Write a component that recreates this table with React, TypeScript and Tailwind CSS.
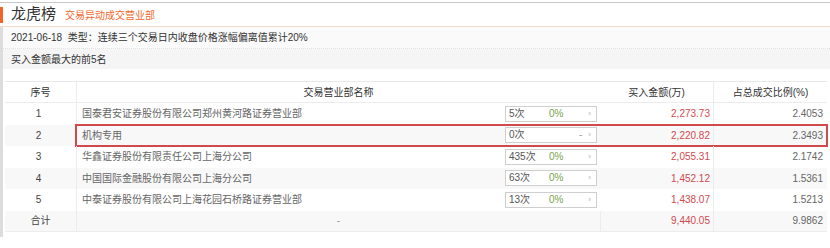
import React from "react";

type Row = {
  no: string;
  name: string;
  times: string;
  pct: string;
  amount: string;
  ratio: string;
};

const rows: Row[] = [
  { no: "1", name: "国泰君安证券股份有限公司郑州黄河路证券营业部", times: "5次", pct: "0%", amount: "2,273.73", ratio: "2.4053" },
  { no: "2", name: "机构专用", times: "0次", pct: "-", amount: "2,220.82", ratio: "2.3493" },
  { no: "3", name: "华鑫证券股份有限责任公司上海分公司", times: "435次", pct: "0%", amount: "2,055.31", ratio: "2.1742" },
  { no: "4", name: "中国国际金融股份有限公司上海分公司", times: "63次", pct: "0%", amount: "1,452.12", ratio: "1.5361" },
  { no: "5", name: "中泰证券股份有限公司上海花园石桥路证券营业部", times: "13次", pct: "0%", amount: "1,438.07", ratio: "1.5213" },
];

function TimesBox({ times, pct }: { times: string; pct: string }) {
  const dash = pct === "-";
  return (
    <div className="flex h-[16px] w-[92px] items-center border border-[#cfcfcf] bg-white pl-[3px] pr-[5px] text-[10px] leading-none">
      <span className="w-[40px] text-[#555]">{times}</span>
      {dash ? (
        <span className="ml-auto text-[#999]">-</span>
      ) : (
        <span className="text-[#7aa44a]">{pct}</span>
      )}
      <span className={dash ? "ml-[6px] text-[8px] text-[#aaa]" : "ml-auto text-[8px] text-[#aaa]"}>›</span>
    </div>
  );
}

export default function App() {
  return (
    <div className="h-[248px] w-[830px] bg-white pt-[2px] font-['Liberation_Sans','Noto_Sans_CJK_SC',sans-serif] text-[10px] text-[#333]">
      <div className="border-t border-[#c8c8c8]">
        <div className="flex h-[24px] items-center border-b border-[#f5dccd]">
          <div className="h-[16px] w-[3px] bg-[#f0642a]" />
          <span className="ml-[8px] text-[15px] text-[#333]">龙虎榜</span>
          <span className="ml-[9px] pt-[2px] text-[10px] text-[#f06a2e]">交易异动成交营业部</span>
        </div>
        <div className="border-l-[3px] border-[#dcdcdc]">
          <div className="flex h-[22px] items-center border-b border-dotted border-[#e2e2e2] bg-[#fafafa] pl-[8px] text-[#333]">
            2021-06-18&nbsp;&nbsp;类型：连续三个交易日内收盘价格涨幅偏离值累计20%
          </div>
          <div className="flex h-[20px] items-center bg-[#f5f5f5] pl-[8px] text-[#333]">买入金额最大的前5名</div>
          <div className="pt-[12px] pb-[5px] pl-[2px] pr-[3px]">
            <div className="border-t border-[#e8e8e8]">
              <div className="flex h-[21px] items-center border-b border-[#ececec] text-[#333]">
                <div className="w-[71px] text-center">序号</div>
                <div className="flex h-full w-[524px] items-center justify-center border-l border-[#ececec]">交易营业部名称</div>
                <div className="flex h-full w-[113px] items-center justify-center">买入金额(万)</div>
                <div className="flex h-full flex-1 items-center justify-center border-l border-[#ececec]">占总成交比例(%)</div>
              </div>
              {rows.map((r, i) => (
                <div
                  key={r.no}
                  className={"flex h-[21.5px] items-center text-[#666] " + (i % 2 === 1 ? "bg-[#f8f8f8]" : "bg-white")}
                >
                  <div className="w-[71px] pr-[4px] text-center text-[#444]">{r.no}</div>
                  <div
                    className={
                      "flex h-full flex-1 items-center " +
                      (r.no === "2" ? "outline-2 -outline-offset-1 outline-[#d0494d]" : "")
                    }
                  >
                    <div className="flex h-full w-[524px] items-center border-l border-[#ececec] pl-[5px] pr-[3px]">
                      <span className="flex-1 text-[#666]">{r.name}</span>
                      <TimesBox times={r.times} pct={r.pct} />
                    </div>
                    <div className="flex h-full w-[113px] items-center justify-end pr-[3px] text-[#d2494e]">{r.amount}</div>
                    <div className="flex h-full flex-1 items-center justify-end border-l border-[#ececec] pr-[4px] text-[#666]">{r.ratio}</div>
                  </div>
                </div>
              ))}
              <div className="flex h-[21.5px] items-center border-b border-[#ececec] bg-[#f8f8f8] text-[#444]">
                <div className="w-[71px] text-center">合计</div>
                <div className="flex h-full w-[524px] items-center justify-center border-l border-[#ececec] text-[#999]">-</div>
                <div className="flex h-full w-[113px] items-center justify-end border-l border-[#ececec] pr-[3px] text-[#d2494e]">9,440.05</div>
                <div className="flex h-full flex-1 items-center justify-end border-l border-[#ececec] pr-[4px] text-[#666]">9.9862</div>
              </div>
            </div>
          </div>
        </div>
      </div>
    </div>
  );
}
